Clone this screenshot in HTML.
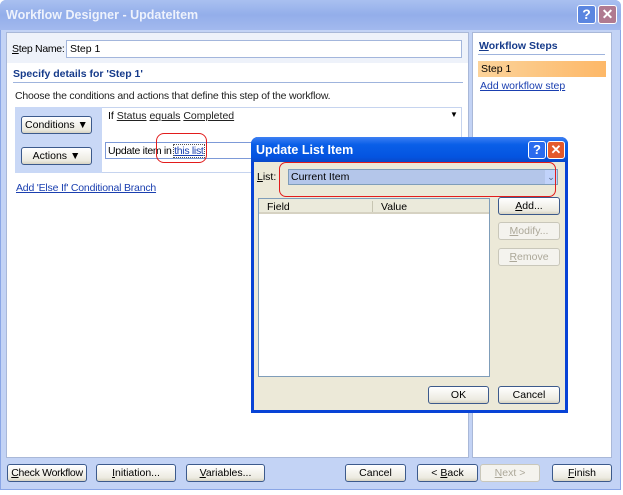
<!DOCTYPE html>
<html><head><style>
*{box-sizing:border-box;margin:0;padding:0}
body{width:623px;height:495px;overflow:hidden;background:#fff;font-family:"Liberation Sans",sans-serif;font-size:10.5px;color:#000;position:relative}
.a{position:absolute;white-space:nowrap}
.btn{position:absolute;white-space:nowrap;border:1px solid #3c5a8c;border-radius:3px;background:linear-gradient(#fff,#eceae0 80%,#d6d2c2);text-align:center;font-size:10.5px;line-height:16px;color:#000}
.dis{border-color:#c9c7ba;color:#aca899;background:#f4f3ee}
a,.lk{color:#1a3fb0;text-decoration:underline}
u{text-decoration:underline}
</style></head><body>
<div class="a" style="left:0;top:0;width:621px;height:490px;background:#c3d3f5;border:1px solid #8aa6e6;border-radius:6px 6px 0 0"></div>
<div class="a" style="left:0;top:0;width:621px;height:30px;background:linear-gradient(#a9c0f0,#93aeea 50%,#a2b9ee);border-radius:6px 6px 0 0"></div>
<div class="a" style="left:6px;top:8px;color:#eef2fc;font-weight:bold;font-size:12.5px">Workflow Designer - UpdateItem</div>
<div class="a" style="left:577px;top:5px;width:19px;height:19px;background:#5b86e0;border:1px solid #fff;border-radius:3px;color:#fff;font-weight:bold;font-size:14px;text-align:center;line-height:17px">?</div>
<div class="a" style="left:598px;top:5px;width:19px;height:19px;background:#b07a90;border:1px solid #fff;border-radius:3px;color:#fff;font-weight:bold;font-size:14px;text-align:center;line-height:17px">✕</div>

<div class="a" style="left:6px;top:32px;width:463px;height:426px;background:#fff;border:1px solid #a9b8d8"></div>
<div class="a" style="left:7px;top:33px;width:461px;height:30px;background:#eef2fa"></div>
<div class="a" style="left:12px;top:43px;letter-spacing:-0.3px"><u>S</u>tep Name:</div>
<div class="a" style="left:66px;top:40px;width:396px;height:18px;border:1px solid #a3b6dc;background:#fff;padding:2px 3px">Step 1</div>
<div class="a" style="left:13px;top:68px;font-weight:bold;color:#153a8a">Specify details for 'Step 1'</div>
<div class="a" style="left:13px;top:82px;width:450px;height:1px;background:#9fb4dd"></div>
<div class="a" style="left:15px;top:90px;color:#222;letter-spacing:-0.2px">Choose the conditions and actions that define this step of the workflow.</div>
<div class="a" style="left:15px;top:107px;width:447px;height:66px;background:#fff;border:1px solid #c6d4ef"></div>
<div class="a" style="left:15px;top:107px;width:87px;height:66px;background:#c9d8f6"></div>
<div class="btn" style="left:21px;top:116px;width:71px;height:18px">Conditions ▼</div>
<div class="btn" style="left:21px;top:147px;width:71px;height:18px">Actions ▼</div>
<div class="a" style="left:108px;top:110px">If <span class="lk" style="color:#222">Status</span> <span class="lk" style="color:#222">equals</span> <span class="lk" style="color:#222">Completed</span></div>
<div class="a" style="left:450px;top:110px;font-size:8px">▼</div>
<div class="a" style="left:105px;top:142px;width:357px;height:17px;border:1px solid #7d9ad8"></div>
<div class="a" style="left:108px;top:145px;letter-spacing:-0.3px">Update item in <span class="lk" style="outline:1px dotted #555">this list</span></div>
<div class="a" style="left:156px;top:133px;width:51px;height:30px;border:1.5px solid #e21c1c;border-radius:8px"></div>
<div class="a" style="left:16px;top:182px;letter-spacing:-0.2px"><a>Add 'Else If' Conditional Branch</a></div>

<div class="a" style="left:472px;top:32px;width:140px;height:426px;background:#fff;border:1px solid #a9b8d8"></div>
<div class="a" style="left:479px;top:40px;font-weight:bold;color:#153a8a"><u>W</u>orkflow Steps</div>
<div class="a" style="left:478px;top:54px;width:127px;height:1px;background:#9fb4dd"></div>
<div class="a" style="left:478px;top:61px;width:128px;height:16px;background:linear-gradient(90deg,#fcd39a,#fdb868);padding:2px 3px">Step 1</div>
<div class="a" style="left:480px;top:80px"><a>Add workflow step</a></div>

<div class="btn" style="left:7px;top:464px;width:80px;height:18px;letter-spacing:-0.3px"><u>C</u>heck Workflow</div>
<div class="btn" style="left:96px;top:464px;width:80px;height:18px"><u>I</u>nitiation...</div>
<div class="btn" style="left:186px;top:464px;width:79px;height:18px"><u>V</u>ariables...</div>
<div class="btn" style="left:345px;top:464px;width:61px;height:18px">Cancel</div>
<div class="btn" style="left:417px;top:464px;width:61px;height:18px">&lt; <u>B</u>ack</div>
<div class="btn dis" style="left:480px;top:464px;width:60px;height:18px"><u>N</u>ext &gt;</div>
<div class="btn" style="left:552px;top:464px;width:60px;height:18px"><u>F</u>inish</div>

<div class="a" style="left:251px;top:137px;width:317px;height:276px;background:#ece9d8;border:3px solid #0843d6;border-top:none;border-radius:7px 7px 0 0"></div>
<div class="a" style="left:251px;top:137px;width:317px;height:25px;background:linear-gradient(#3d80f3,#0a5fe8 30%,#0454e0 80%,#0a47c8);border-radius:7px 7px 0 0"></div>
<div class="a" style="left:256px;top:143px;color:#fff;font-weight:bold;font-size:12.5px">Update List Item</div>
<div class="a" style="left:528px;top:141px;width:18px;height:18px;background:#2a6bee;border:1px solid #fff;border-radius:3px;color:#fff;font-weight:bold;font-size:13px;text-align:center;line-height:16px">?</div>
<div class="a" style="left:547px;top:141px;width:18px;height:18px;background:#e45a2c;border:1px solid #fff;border-radius:3px;color:#fff;font-weight:bold;font-size:13px;text-align:center;line-height:16px">✕</div>
<div class="a" style="left:257px;top:171px"><u>L</u>ist:</div>
<div class="a" style="left:288px;top:169px;width:270px;height:16px;background:#b4c6ea;border:1px solid #7f9db9;padding:1px 2px">Current Item</div>
<div class="a" style="left:545px;top:170px;width:12px;height:14px;background:#c1d3fb;color:#4d6185;font-size:9px;text-align:center;line-height:14px">⌄</div>
<div class="a" style="left:279px;top:162px;width:277px;height:35px;border:1.5px solid #e21c1c;border-radius:7px"></div>
<div class="a" style="left:258px;top:198px;width:232px;height:179px;background:#fff;border:1px solid #7f9db9"></div>
<div class="a" style="left:259px;top:199px;width:230px;height:15px;background:#ebeadb;border-bottom:2px solid #d6d2c2"></div>
<div class="a" style="left:372px;top:201px;width:1px;height:11px;background:#c7c5b2"></div>
<div class="a" style="left:267px;top:201px">Field</div>
<div class="a" style="left:381px;top:201px">Value</div>
<div class="btn" style="left:498px;top:197px;width:62px;height:18px"><u>A</u>dd...</div>
<div class="btn dis" style="left:498px;top:222px;width:62px;height:18px"><u>M</u>odify...</div>
<div class="btn dis" style="left:498px;top:248px;width:62px;height:18px"><u>R</u>emove</div>
<div class="btn" style="left:428px;top:386px;width:61px;height:18px">OK</div>
<div class="btn" style="left:498px;top:386px;width:62px;height:18px">Cancel</div>
</body></html>
